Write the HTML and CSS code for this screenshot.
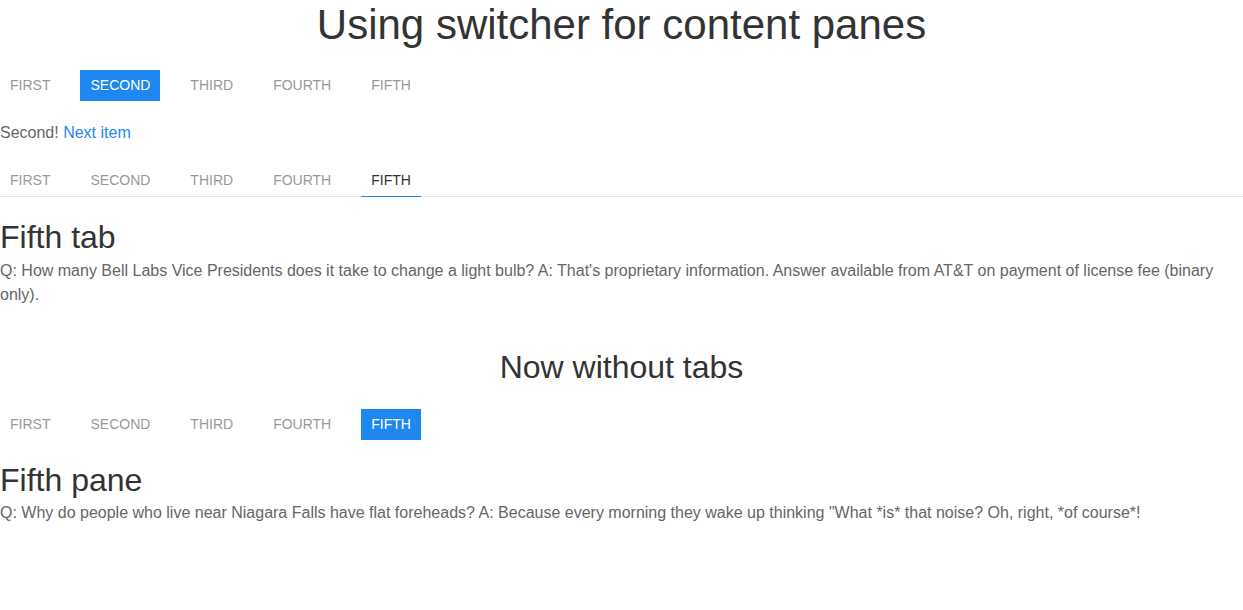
FILE: index.html
```html
<!DOCTYPE html>
<html lang="en">
<head>
<meta charset="utf-8">
<title>Switcher</title>
<link rel="stylesheet" href="styles.css">
</head>
<body>
<h1 class="title">Using switcher for content panes</h1>
<ul class="subnav">
  <li><a href="#">First</a></li>
  <li class="active"><a href="#">Second</a></li>
  <li><a href="#">Third</a></li>
  <li><a href="#">Fourth</a></li>
  <li><a href="#">Fifth</a></li>
</ul>
<p class="text">Second! <a class="link" href="#">Next item</a></p>
<ul class="tab">
  <li><a href="#">First</a></li>
  <li><a href="#">Second</a></li>
  <li><a href="#">Third</a></li>
  <li><a href="#">Fourth</a></li>
  <li class="active"><a href="#">Fifth</a></li>
</ul>
<div class="pane">
  <h2 class="pane-title">Fifth tab</h2>
  <p class="text">Q: How many Bell Labs Vice Presidents does it take to change a light bulb? A: That's proprietary information. Answer available from AT&amp;T on payment of license fee (binary only).</p>
</div>
<h2 class="section-title">Now without tabs</h2>
<ul class="subnav">
  <li><a href="#">First</a></li>
  <li><a href="#">Second</a></li>
  <li><a href="#">Third</a></li>
  <li><a href="#">Fourth</a></li>
  <li class="active"><a href="#">Fifth</a></li>
</ul>
<div class="pane">
  <h2 class="pane-title">Fifth pane</h2>
  <p class="text">Q: Why do people who live near Niagara Falls have flat foreheads? A: Because every morning they wake up thinking "What *is* that noise? Oh, right, *of course*!</p>
</div>
</body>
</html>
```
FILE: styles.css
```css
html {
  font-family: "Liberation Sans", Arial, sans-serif;
  font-size: 16px;
  line-height: 1.5;
  color: #666;
  background: #fff;
}
body {
  margin: 0;
}
.title {
  margin: 0 0 20px;
  font-size: 42px;
  line-height: 1.2;
  font-weight: 400;
  color: #333;
  text-align: center;
}
.subnav, .tab {
  list-style: none;
  margin: 0 0 20px;
  padding: 0;
  display: flex;
  gap: 20px;
}
.subnav a, .tab a {
  display: block;
  padding: 5px 10px;
  font-size: 14px;
  line-height: 21px;
  text-transform: uppercase;
  color: #999;
  text-decoration: none;
}
.subnav .active a {
  background: #1e87f0;
  color: #fff;
}
.tab {
  position: relative;
}
.tab::before {
  content: "";
  position: absolute;
  left: 0;
  right: 0;
  bottom: 0;
  border-bottom: 1px solid #e5e5e5;
}
.tab a {
  position: relative;
  border-bottom: 1px solid transparent;
}
.tab .active a {
  color: #333;
  border-bottom-color: #1e87f0;
}
.text {
  margin: 0 0 20px;
}
.link {
  color: #1e87f0;
  text-decoration: none;
}
.pane-title {
  margin: 0;
  font-size: 32px;
  line-height: 1.3;
  font-weight: 400;
  color: #333;
}
.section-title {
  margin: 40px 0 20px;
  font-size: 32px;
  line-height: 1.3;
  font-weight: 400;
  color: #333;
  text-align: center;
}
```
